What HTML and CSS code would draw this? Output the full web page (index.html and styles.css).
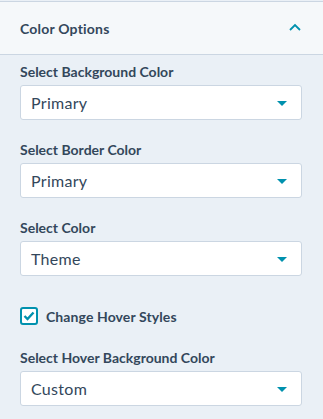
FILE: index.html
```html
<!DOCTYPE html>
<html lang="en">
<head>
  <meta charset="UTF-8">
  <meta name="viewport" content="width=device-width, initial-scale=1.0">
  <title>Color Options</title>
  <link rel="stylesheet" href="styles.css">
</head>
<body>
  <div class="panel">
    <div class="panel-header">
      <span>Color Options</span>
      <svg class="chevron" width="12" height="8" viewBox="0 0 12 8"><path d="M1 7 L6 2 L11 7" fill="none" stroke="#0091ae" stroke-width="1.8"/></svg>
    </div>
    <div class="panel-body">
      <div class="field">
        <label>Select Background Color</label>
        <div class="select"><span>Primary</span><i class="caret"></i></div>
      </div>
      <div class="field">
        <label>Select Border Color</label>
        <div class="select"><span>Primary</span><i class="caret"></i></div>
      </div>
      <div class="field">
        <label>Select Color</label>
        <div class="select"><span>Theme</span><i class="caret"></i></div>
      </div>
      <div class="check-row">
        <span class="checkbox">
          <svg width="12" height="10" viewBox="0 0 12 10"><path d="M1.5 5 L4.5 8 L10.5 1.5" fill="none" stroke="#0091ae" stroke-width="2.4"/></svg>
        </span>
        <span class="check-label">Change Hover Styles</span>
      </div>
      <div class="field">
        <label>Select Hover Background Color</label>
        <div class="select"><span>Custom</span><i class="caret"></i></div>
      </div>
    </div>
  </div>
</body>
</html>
```

FILE: styles.css
```css
html, body {
  overflow: hidden;
}
body {
  margin: 0;
  font-family: Lato, "Noto Sans", sans-serif;
  color: #33475b;
  background-color: #eaf0f6;
}
.panel-header {
  display: flex;
  justify-content: space-between;
  align-items: center;
  height: 52px;
  padding: 0 22px 0 20px;
  margin-top: 1px;
  border-top: 1px solid #cbd6e2;
  border-bottom: 1px solid #cbd6e2;
  background-color: #f5f8fa;
  font-size: 14px;
  font-weight: bold;
  letter-spacing: 0.2px;
}
.chevron {
  margin-top: -2px;
}
.panel-body {
  padding: 9px 21px 0 20px;
}
.field {
  margin-bottom: 22px;
}
label {
  display: block;
  font-size: 14px;
  font-weight: bold;
  line-height: 16px;
  margin-bottom: 5px;
}
.select {
  display: flex;
  justify-content: space-between;
  align-items: center;
  height: 33px;
  padding: 0 14px 0 10px;
  background-color: #fff;
  border: 1px solid #cbd6e2;
  border-radius: 3px;
  font-size: 16px;
  letter-spacing: 0.3px;
}
.caret {
  width: 0;
  height: 0;
  border-left: 5px solid transparent;
  border-right: 5px solid transparent;
  border-top: 5px solid #0091ae;
  margin-top: 2px;
}
.check-row {
  display: flex;
  align-items: center;
  gap: 8px;
  height: 18px;
  margin: 31px 0 25px;
}
.checkbox {
  display: flex;
  justify-content: center;
  align-items: center;
  width: 14px;
  height: 14px;
  border: 2px solid #0091ae;
  border-radius: 3px;
  background-color: #fff;
}
.check-label {
  font-size: 14px;
  font-weight: bold;
  letter-spacing: 0.1px;
}
```
